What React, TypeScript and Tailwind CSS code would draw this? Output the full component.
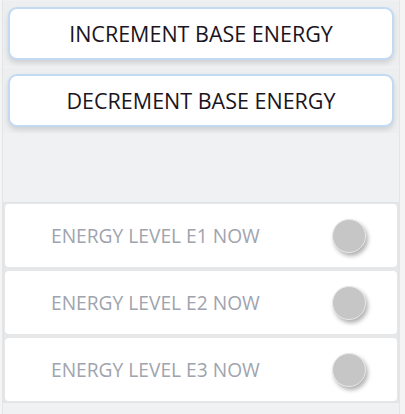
import React from "react";

const levels = ["E1", "E2", "E3"];

function ActionButton({ label }: { label: string }) {
  return (
    <div className="bg-[#eceef0] px-[5px] py-[6px]">
      <button className="flex h-[53px] w-full items-center justify-center rounded-[9px] border-2 border-[#c3daf3] bg-white pt-[2px] text-[21.5px] text-[#1b1420] shadow-[0_3px_5px_rgba(0,0,0,0.12)]">
        {label}
      </button>
    </div>
  );
}

function LevelRow({ level }: { level: string }) {
  return (
    <div className="flex h-[63px] items-center justify-between rounded-[4px] bg-white pl-[46px] pr-[31px]">
      <span className="pt-[2px] text-[19.2px] text-[#a0a4ae]">ENERGY LEVEL {level} NOW</span>
      <span className="h-[34px] w-[34px] rounded-full border border-[#e8e8e8] bg-[#c6c6c6] shadow-[2px_3px_4px_rgba(0,0,0,0.3)]" />
    </div>
  );
}

export default function App() {
  return (
    <div
      className="h-[414px] w-[405px] bg-[#f4f4f5] px-[2px]"
      style={{ fontFamily: '"Open Sans", "Noto Sans", sans-serif' }}
    >
      <div className="flex h-full w-[398px] flex-col border-x border-[#e4e5e7] bg-[#f0f1f3]">
        <div className="pt-[1px]">
          <ActionButton label="INCREMENT BASE ENERGY" />
          <div className="h-[2px]" />
          <ActionButton label="DECREMENT BASE ENERGY" />
        </div>
        <div className="mt-[69px] flex flex-col gap-[4px] border border-[#e2e3e5] bg-[#e6e7e9] p-[1px]">
          {levels.map((l) => (
            <LevelRow key={l} level={l} />
          ))}
        </div>
      </div>
    </div>
  );
}
